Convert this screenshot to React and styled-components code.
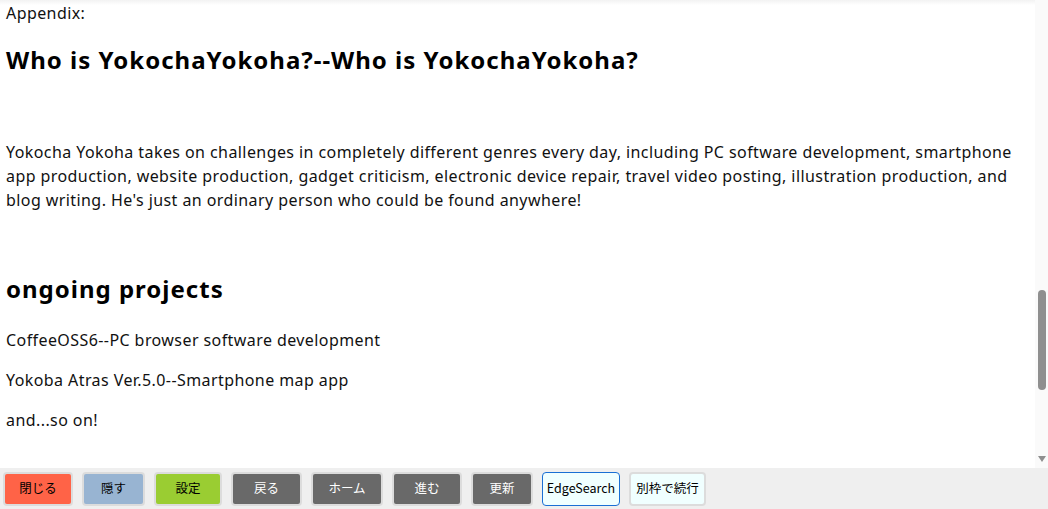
import React from 'react'
import styled, { createGlobalStyle } from 'styled-components'

const Global = createGlobalStyle`
  html, body {
    margin: 0;
    padding: 0;
    background: #ffffff;
  }
  body {
    font-family: "Noto Sans", "Noto Sans CJK JP", sans-serif;
    color: #111111;
  }
`

const Page = styled.div`
  width: 1048px;
  height: 509px;
  display: flex;
  flex-direction: column;
  overflow: hidden;
`

const Main = styled.div`
  flex: 1;
  display: flex;
  flex-direction: row;
  min-height: 0;
`

const Content = styled.div`
  flex: 1;
  padding: 1px 6px 0;
  overflow: hidden;
  background: linear-gradient(#f2f2f2, #ffffff 5px);
  font-size: 16px;
  line-height: 24px;
  letter-spacing: 0.42px;
`

const Line = styled.p`
  margin: 0 0 ${p => p.gap ?? 16}px;
`

const Heading = styled.h2`
  margin: ${p => p.top}px 0 ${p => p.bottom}px;
  font-size: 24px;
  line-height: 36px;
  font-weight: 700;
  letter-spacing: 1px;
  color: #000;
`

const Track = styled.div`
  width: 13px;
  background: #fafafa;
  display: flex;
  flex-direction: column;
  align-items: center;
`

const Thumb = styled.div`
  width: 8px;
  height: 100px;
  margin-top: 290px;
  border-radius: 4px;
  background: #8f8f8f;
`

const Arrow = styled.div`
  margin-top: auto;
  margin-bottom: 6px;
  width: 0;
  height: 0;
  border-left: 4px solid transparent;
  border-right: 4px solid transparent;
  border-top: 6px solid #8f8f8f;
`

const Toolbar = styled.div`
  height: 41px;
  background: #efefef;
  display: flex;
  align-items: center;
  padding: 0 0 0 3px;
  gap: 9px;
`

const Button = styled.button`
  box-sizing: border-box;
  width: ${p => p.w}px;
  height: 34px;
  padding: 0;
  border: ${p => (p.focus ? '1px solid #1a6fd4' : '2px solid #dcdcdc')};
  border-radius: 4px;
  background: ${p => p.bg};
  color: ${p => p.fg || '#000'};
  font-family: "Noto Sans CJK JP", "Noto Sans", sans-serif;
  font-size: 12.5px;
  line-height: 1;
`

const buttons = [
  { label: '閉じる', w: 70, bg: '#ff6347' },
  { label: '隠す', w: 63, bg: '#98b4d2' },
  { label: '設定', w: 68, bg: '#9acd32' },
  { label: '戻る', w: 71, bg: '#696969', fg: '#fff' },
  { label: 'ホーム', w: 72, bg: '#696969', fg: '#fff' },
  { label: '進む', w: 70, bg: '#696969', fg: '#fff' },
  { label: '更新', w: 62, bg: '#696969', fg: '#fff' },
  { label: 'EdgeSearch', w: 78, bg: '#f0ffff', focus: true },
  { label: '別枠で続行', w: 77, bg: '#f0ffff' },
]

export default function App() {
  return (
    <Page>
      <Global />
      <Main>
        <Content>
          <Line gap={0}>Appendix:</Line>
          <Heading top={17} bottom={62}>Who is YokochaYokoha?--Who is YokochaYokoha?</Heading>
          <Line gap={0}>
            Yokocha Yokoha takes on challenges in completely different genres every day, including PC software
            development, smartphone app production, website production, gadget criticism, electronic device repair,
            travel video posting, illustration production, and blog writing. He's just an ordinary person who could be
            found anywhere!
          </Line>
          <Heading top={59} bottom={21}>ongoing projects</Heading>
          <Line>CoffeeOSS6--PC browser software development</Line>
          <Line>Yokoba Atras Ver.5.0--Smartphone map app</Line>
          <Line>and...so on!</Line>
        </Content>
        <Track>
          <Thumb />
          <Arrow />
        </Track>
      </Main>
      <Toolbar>
        {buttons.map(b => (
          <Button key={b.label} w={b.w} bg={b.bg} fg={b.fg} focus={b.focus}>
            {b.label}
          </Button>
        ))}
      </Toolbar>
    </Page>
  )
}
